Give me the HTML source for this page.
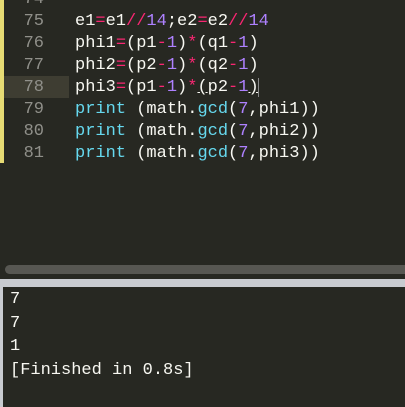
<!DOCTYPE html><html><head><style>
body{margin:0;width:405px;height:407px;background:#272822;overflow:hidden;position:relative;font-family:"Liberation Mono",monospace;font-size:17px;}
.l{position:absolute;left:0;height:22px;line-height:22px;white-space:pre;}
.n{position:absolute;width:44px;text-align:right;color:#90908a;}
.c{position:absolute;left:75px;color:#f8f8f2;}
.p{color:#f92672}.v{color:#ae81ff}.b{color:#66d9ef}
.o{position:absolute;left:10px;color:#f8f8f2;white-space:pre;line-height:23.5px}
</style></head><body>
<div style="position:absolute;left:0;top:0;width:4px;height:163px;background:#e6db74"></div>
<div style="position:absolute;left:4px;top:76px;width:65px;height:22px;background:#3e3d32"></div>
<div class="l" style="top:-11px"><span class="n">74</span></div>
<div class="l" style="top:11px"><span class="n">75</span><span class="c">e1<span class="p">=</span>e1<span class="p">//</span><span class="v">14</span>;e2<span class="p">=</span>e2<span class="p">//</span><span class="v">14</span></span></div>
<div class="l" style="top:33px"><span class="n">76</span><span class="c">phi1<span class="p">=</span>(p1<span class="p">-</span><span class="v">1</span>)<span class="p">*</span>(q1<span class="p">-</span><span class="v">1</span>)</span></div>
<div class="l" style="top:55px"><span class="n">77</span><span class="c">phi2<span class="p">=</span>(p2<span class="p">-</span><span class="v">1</span>)<span class="p">*</span>(q2<span class="p">-</span><span class="v">1</span>)</span></div>
<div class="l" style="top:77px"><span class="n">78</span><span class="c">phi3<span class="p">=</span>(p1<span class="p">-</span><span class="v">1</span>)<span class="p">*</span><u>(</u>p2<span class="p">-</span><span class="v">1</span><u>)</u></span></div>
<div class="l" style="top:99px"><span class="n">79</span><span class="c"><span class="b">print</span> (math.<span class="b">gcd</span>(<span class="v">7</span>,phi1))</span></div>
<div class="l" style="top:121px"><span class="n">80</span><span class="c"><span class="b">print</span> (math.<span class="b">gcd</span>(<span class="v">7</span>,phi2))</span></div>
<div class="l" style="top:143px"><span class="n">81</span><span class="c"><span class="b">print</span> (math.<span class="b">gcd</span>(<span class="v">7</span>,phi3))</span></div>
<div style="position:absolute;left:258px;top:78px;width:1px;height:19px;background:#888"></div>
<div style="position:absolute;left:5px;top:265px;width:410px;height:9px;border-radius:5px;background:#575752"></div>
<div style="position:absolute;left:0;top:279px;width:405px;height:8px;background:#c8cbd0"></div>
<div style="position:absolute;left:0;top:287px;width:3px;height:120px;background:#c8cbd0"></div>
<div class="o" style="top:288px">7
7
1
[Finished in 0.8s]</div>
</body></html>
